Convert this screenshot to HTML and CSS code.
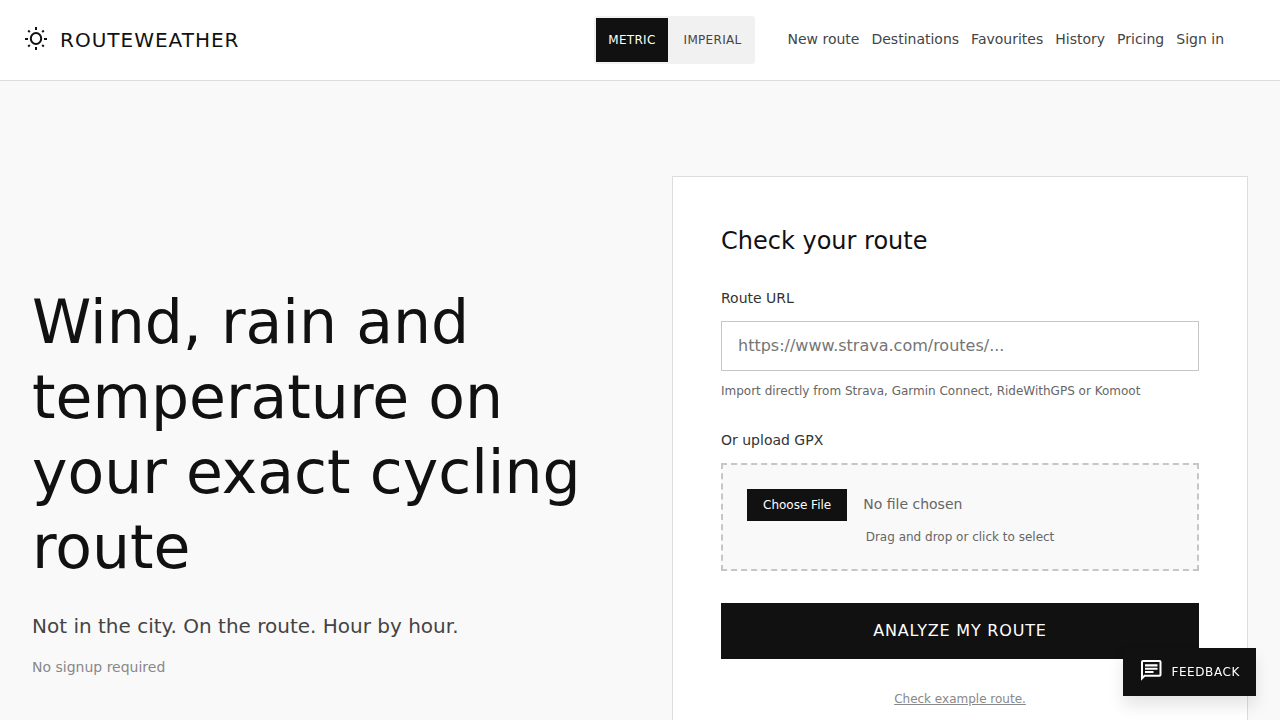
FILE: index.html
```html
<!DOCTYPE html>
<html lang="en">

<head>
	<meta charset="UTF-8">
	<meta name="viewport" content="width=device-width, initial-scale=1.0">
	<title>RouteWeather</title>
	<link rel="stylesheet" href="styles.css">
</head>

<body>
	<header class="site-header">
		<a class="logo" href="#">
			<svg class="logo-icon" viewBox="0 0 24 26" fill="none" stroke="currentColor" stroke-width="2" aria-hidden="true">
				<ellipse cx="12" cy="11.5" rx="5.200" ry="5.500" />
				<path d="M12 0v3M12 20v3M1 12h3M20 12h3M4.200 3.500l1.600 1.600M18.200 18l1.600 1.600M4.200 19.600l1.600-1.600M18.200 5.100l1.600-1.600" />
			</svg>
			<span class="logo-text">ROUTEWEATHER</span>
		</a>
		<div class="header-right">
			<div class="unit-toggle">
				<button type="button" class="unit active" aria-pressed="true">METRIC</button>
				<button type="button" class="unit" aria-pressed="false">IMPERIAL</button>
			</div>
			<nav class="nav">
				<a href="#">New route</a>
				<a href="#">Destinations</a>
				<a href="#">Favourites</a>
				<a href="#">History</a>
				<a href="#">Pricing</a>
				<a href="#">Sign in</a>
			</nav>
		</div>
	</header>

	<main class="hero">
		<section class="intro">
			<h1>Wind, rain and temperature on your exact cycling route</h1>
			<p class="lead">Not in the city. On the route. Hour by hour.</p>
			<p class="note">No signup required</p>
		</section>

		<section class="card">
			<h2>Check your route</h2>
			<form class="route-form">
				<div class="field">
					<label for="routeUrl">Route URL</label>
					<input class="url-input" type="url" id="routeUrl" placeholder="https://www.strava.com/routes/...">
					<p class="hint">Import directly from Strava, Garmin Connect, RideWithGPS or Komoot</p>
				</div>
				<div class="field">
					<label for="gpxFile">Or upload GPX</label>
					<div class="dropzone">
						<input class="file-input" type="file" id="gpxFile" accept=".gpx">
						<p class="drop-hint">Drag and drop or click to select</p>
					</div>
				</div>
				<button type="submit" class="submit">ANALYZE MY ROUTE</button>
			</form>
			<a class="example-link" href="#">Check example route.</a>
		</section>
	</main>

	<button type="button" class="feedback">
		<svg class="feedback-icon" viewBox="0 2 24 24" fill="currentColor" aria-hidden="true">
			<path d="M20.500 2H4c-1.100 0-2 .9-2 2v18.700l4-4h14.500c1.100 0 2-.9 2-2V4c0-1.100-.9-2-2-2zm0 14.700H5.200L4 17.900V4h16.500v12.700zM6 13h8.500v2H6zM6 9.800h12.500v2H6zM6 6.200h12.500v2.300H6z" />
		</svg>
		FEEDBACK
	</button>
</body>

</html>
```

FILE: styles.css
```css
* {
	box-sizing: border-box;
}

body {
	font-family: 'DejaVu Sans', sans-serif;
	line-height: 1.5;
	margin: 0;
	padding-top: 80px;
	background-color: #f9f9f9;
	color: #111;
}

h1,
h2,
p {
	margin: 0;
	font-weight: normal;
}

a {
	color: inherit;
	text-decoration: none;
}

button,
input {
	font-family: inherit;
}

button {
	border: 0;
	cursor: pointer;
}

.site-header {
	position: fixed;
	top: 0;
	left: 0;
	right: 0;
	z-index: 10;
	display: flex;
	justify-content: space-between;
	align-items: center;
	padding: 16px 56px 16px 24px;
	background-color: #fff;
	border-bottom: 1px solid #ddd;
}

.logo {
	display: flex;
	align-items: center;
	gap: 12px;
}

.logo-icon {
	width: 24px;
	height: 26px;
}

.logo-text {
	font-size: 20px;
	letter-spacing: 0.05em;
}

.header-right {
	display: flex;
	align-items: center;
	gap: 32px;
}

.unit-toggle {
	display: flex;
	gap: 4px;
	padding: 2px;
	background-color: #f1f1f1;
	border-radius: 3px;
}

.unit {
	height: 44px;
	padding: 0 12px;
	background-color: transparent;
	color: #444;
	font-size: 12px;
	letter-spacing: 0.025em;
}

.unit.active {
	background-color: #111;
	color: #fff;
}

.nav {
	display: flex;
	gap: 12px;
	font-size: 14px;
	line-height: 20px;
	padding-bottom: 2px;
	color: #444;
}

.hero {
	display: grid;
	grid-template-columns: 1fr 1fr;
	gap: 64px;
	align-items: center;
	max-width: 1280px;
	margin: 0 auto;
	padding: 96px 32px;
}

.intro h1 {
	font-size: 60px;
	line-height: 75px;
	margin-bottom: 24px;
}

.lead {
	font-size: 20px;
	line-height: 34px;
	color: #444;
	margin-bottom: 14px;
}

.note {
	font-size: 14px;
	line-height: 20px;
	color: #888;
}

.card {
	background-color: #fff;
	border: 1px solid #ddd;
	padding: 48px 48px 78px;
}

.card h2 {
	font-size: 24px;
	line-height: 32px;
	margin-bottom: 32px;
}

.route-form {
	display: flex;
	flex-direction: column;
	gap: 32px;
}

.field label {
	display: block;
	font-size: 14px;
	line-height: 18px;
	color: #333;
	margin-bottom: 14px;
}

.url-input {
	display: block;
	width: 100%;
	height: 50px;
	padding: 0 16px 2px;
	border: 1px solid #c6c6c6;
	background-color: #fff;
	font-size: 16px;
}

.url-input::placeholder {
	color: #757575;
}

.hint,
.drop-hint {
	font-size: 12px;
	line-height: 16px;
	color: #666;
}

.hint {
	margin-top: 12px;
}

.dropzone {
	padding: 24px;
	border: 2px dashed #c6c6c6;
	background-color: #f9f9f9;
}

.file-input {
	display: block;
	width: 100%;
	font-size: 14px;
	color: #666;
}

.file-input::file-selector-button {
	font-family: inherit;
	font-size: 12px;
	line-height: 16px;
	padding: 8px 16px;
	margin-right: 16px;
	border: 0;
	background-color: #111;
	color: #fff;
}

.drop-hint {
	margin-top: 8px;
	text-align: center;
}

.submit {
	height: 56px;
	padding-bottom: 2px;
	background-color: #111;
	color: #fff;
	font-size: 16px;
	letter-spacing: 0.05em;
}

.example-link {
	display: block;
	margin-top: 32px;
	font-size: 12px;
	line-height: 16px;
	text-align: center;
	text-decoration: underline;
	color: #888;
}

.feedback {
	position: fixed;
	right: 24px;
	bottom: 24px;
	z-index: 20;
	display: flex;
	align-items: center;
	gap: 8px;
	height: 48px;
	padding: 0 16px;
	background-color: #111;
	color: #fff;
	font-size: 12px;
	letter-spacing: 0.05em;
	box-shadow: 0 10px 15px rgba(0, 0, 0, 0.1);
}

.feedback-icon {
	width: 24px;
	height: 24px;
}
```
